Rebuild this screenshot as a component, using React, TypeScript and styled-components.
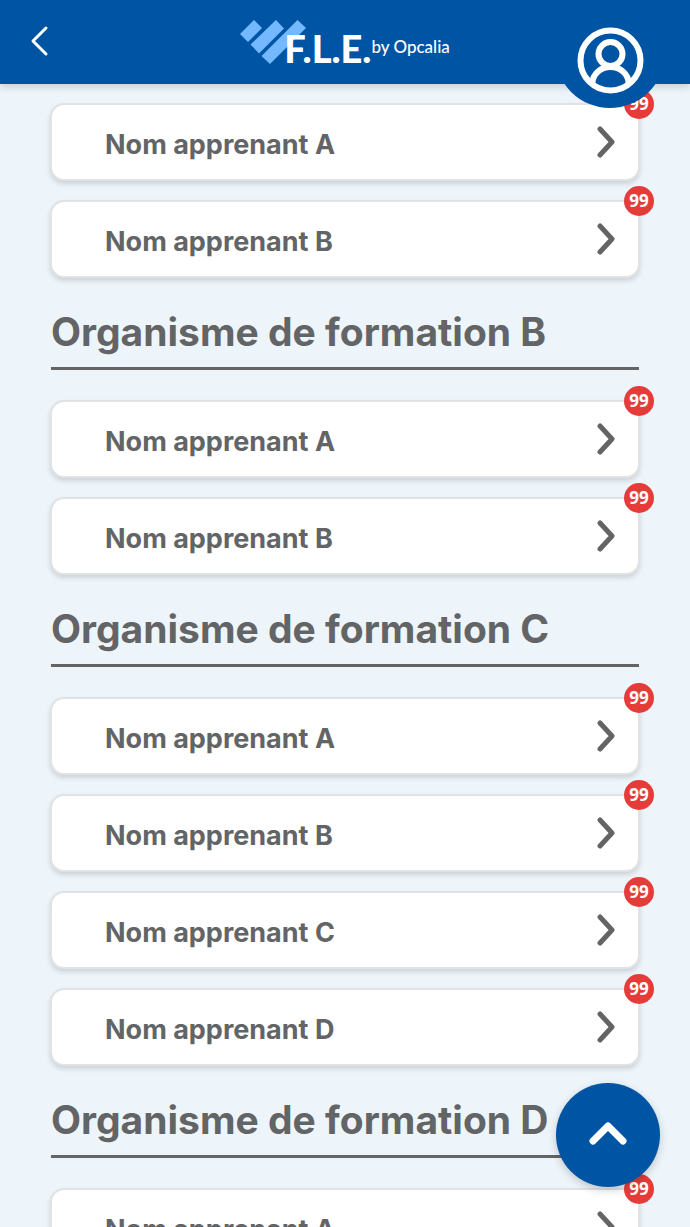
import React from "react";
import styled, { createGlobalStyle } from "styled-components";

const GlobalStyle = createGlobalStyle`
  *, *::before, *::after { box-sizing: border-box; }
  body {
    margin: 0;
    background: #edf5fb;
    color: #636466;
    font-family: Inter, "Liberation Sans", sans-serif;
  }
`;

const Shell = styled.div`
  position: relative;
  display: flex;
  flex-direction: column;
  height: 100vh;
  overflow: hidden;
`;

const Header = styled.header`
  position: relative;
  z-index: 2;
  flex: none;
  display: flex;
  align-items: center;
  justify-content: center;
  height: 84px;
  background: #0054a4;
  box-shadow: 0 3px 8px rgba(0, 0, 0, 0.16);
`;

const BackButton = styled.button`
  position: absolute;
  left: 20px;
  top: 16px;
  width: 40px;
  height: 50px;
  padding: 0;
  border: 0;
  background: none;
  cursor: pointer;
`;

const ProfileButton = styled.button`
  position: absolute;
  right: 25px;
  top: -2px;
  width: 110px;
  height: 110px;
  padding: 0;
  border: 0;
  border-radius: 50%;
  background: #0054a4;
  cursor: pointer;
`;

const Icon = styled.svg`
  display: block;
  fill: none;
  stroke: currentColor;
  stroke-linecap: round;
  stroke-linejoin: round;
`;

const WhiteIcon = styled(Icon)`
  color: #fff;
`;

const Logo = styled.a`
  display: flex;
  align-items: center;
  color: #fff;
  text-decoration: none;
`;

const LogoMark = styled.svg`
  display: block;
  width: 66px;
  height: 46px;
  margin-right: -22px;
`;

const LogoName = styled.span`
  position: relative;
  padding-top: 12px;
  font: 900 38px/40px Lato, sans-serif;
`;

const LogoOwner = styled.span`
  padding-top: 9px;
  font: 500 17px/24px Lato, sans-serif;
`;

const Main = styled.main`
  flex: 1;
  min-height: 0;
  padding: 19px 51px 0;
  overflow-x: hidden;
  overflow-y: auto;
  scrollbar-width: none;
`;

const SectionTitle = styled.h2`
  margin: 30px 0;
  padding-bottom: 11px;
  border-bottom: 3px solid #636466;
  font-size: 39px;
  font-weight: 700;
  line-height: 48px;
`;

const List = styled.ul`
  display: flex;
  flex-direction: column;
  gap: 19px;
  margin: 0;
  padding: 0;
  list-style: none;
`;

const Card = styled.a`
  position: relative;
  display: flex;
  align-items: center;
  justify-content: space-between;
  height: 78px;
  margin: 0 -1px;
  padding: 0 21px 0 53px;
  border: 2px solid #e0e2e4;
  border-radius: 14px;
  background: #fff;
  box-shadow: 0 3px 5px rgba(0, 0, 0, 0.14);
  color: #636466;
  font-size: 27px;
  font-weight: 700;
  line-height: 36px;
  text-decoration: none;
`;

const CardName = styled.span`
  padding-top: 5px;
`;

const Badge = styled.span`
  position: absolute;
  top: -16px;
  right: -16px;
  width: 30px;
  height: 30px;
  border-radius: 50%;
  background: #e63c39;
  color: #fff;
  font: 700 17px/30px "Open Sans", sans-serif;
  text-align: center;
`;

const TopButton = styled.button`
  position: absolute;
  z-index: 3;
  right: 30px;
  bottom: 40px;
  width: 104px;
  height: 104px;
  padding: 0;
  border: 0;
  border-radius: 50%;
  background: #0054a4;
  box-shadow: 0 3px 8px rgba(0, 0, 0, 0.2);
  cursor: pointer;
`;

const sections = [
  { title: "", learners: ["A", "B"] },
  { title: "Organisme de formation B", learners: ["A", "B"] },
  { title: "Organisme de formation C", learners: ["A", "B", "C", "D"] },
  { title: "Organisme de formation D", learners: ["A"] },
];

function LearnerCard({ name }: { name: string }) {
  return (
    <li>
      <Card href="#">
        <CardName>{name}</CardName>
        <Icon width="20" height="36" viewBox="0 0 20 36" strokeWidth="5">
          <path d="M3 5 L15 18 L3 31" />
        </Icon>
        <Badge>99</Badge>
      </Card>
    </li>
  );
}

export default function App() {
  const main = React.useRef<HTMLElement>(null);
  return (
    <Shell>
      <GlobalStyle />
      <Header>
        <BackButton aria-label="Retour">
          <WhiteIcon width="40" height="50" viewBox="0 0 40 50" strokeWidth="3">
            <path d="M26 12 L13 25 L26 38" />
          </WhiteIcon>
        </BackButton>
        <Logo href="#">
          <LogoMark viewBox="0 0 66 46" fill="#74b9ff">
            <path d="M0 15 L14 1 L22 9 L8 23 Z" />
            <path d="M10.500 25.500 L36 1 L44 9.500 L19 34.500 Z" />
            <path d="M21.500 37 L57.500 1 L66 9 L30 45 Z" />
          </LogoMark>
          <LogoName>F.L.E.</LogoName>
          <LogoOwner>by Opcalia</LogoOwner>
        </Logo>
        <ProfileButton aria-label="Profil">
          <WhiteIcon width="110" height="110" viewBox="0 0 110 110" strokeWidth="6">
            <circle cx="55.500" cy="62.500" r="30" />
            <circle cx="55.500" cy="56" r="12" />
            <path d="M37.500 85 A18 16 0 0 1 73.500 85" />
          </WhiteIcon>
        </ProfileButton>
      </Header>
      <Main ref={main}>
        {sections.map((section, index) => (
          <section key={index}>
            {section.title && <SectionTitle>{section.title}</SectionTitle>}
            <List>
              {section.learners.map((letter) => (
                <LearnerCard key={letter} name={`Nom apprenant ${letter}`} />
              ))}
            </List>
          </section>
        ))}
      </Main>
      <TopButton
        aria-label="Haut de page"
        onClick={() => main.current?.scrollTo({ top: 0 })}
      >
        <WhiteIcon width="104" height="104" viewBox="0 0 104 104" strokeWidth="7">
          <path d="M37 58 L52 43 L67 58" />
        </WhiteIcon>
      </TopButton>
    </Shell>
  );
}
